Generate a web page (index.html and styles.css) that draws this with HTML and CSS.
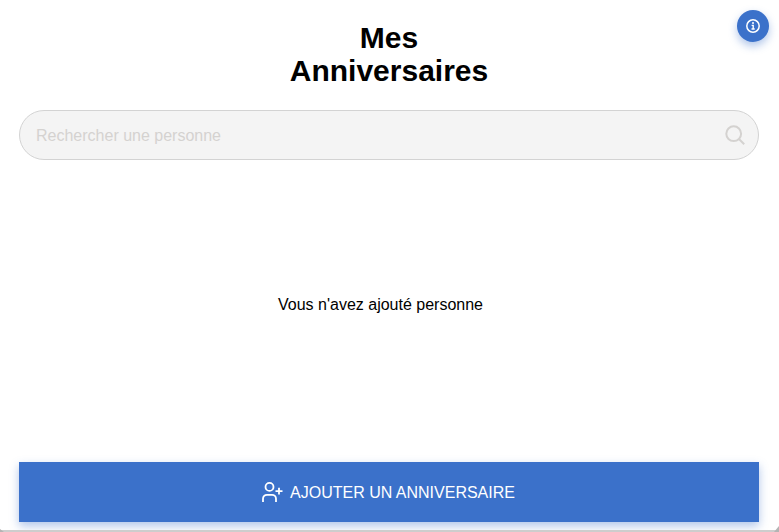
FILE: index.html
```html
<!DOCTYPE html>
<html lang="fr">
<head>
<meta charset="utf-8">
<title>Mes Anniversaires</title>
<link rel="stylesheet" href="styles.css">
</head>
<body>
<main class="app">
  <h1 class="title">Mes<br>Anniversaires</h1>
  <button class="info" aria-label="Informations">
    <svg width="14" height="14" viewBox="0 0 14 14" fill="none" stroke="currentColor"><circle cx="7" cy="7" r="6.2" stroke-width="1.5"/><path d="M5.6 6.4h1.6V10M5.5 10h3.2" stroke-width="1.4"/><circle cx="7" cy="3.9" r="1" fill="currentColor" stroke="none"/></svg>
  </button>
  <label class="search">
    <input class="search-input" type="text" placeholder="Rechercher une personne">
    <svg width="20" height="20" viewBox="0 0 20 20" fill="none" stroke="currentColor" stroke-width="2"><circle cx="8.7" cy="8.7" r="7.4"/><path d="M14 14l5.2 5.2"/></svg>
  </label>
  <section class="empty"><p class="message">Vous n'avez ajouté personne</p></section>
  <button class="add">
    <svg width="21" height="20" viewBox="0 0 21 20" fill="none" stroke="currentColor" stroke-width="1.8"><circle cx="7.5" cy="4.9" r="4"/><path d="M1 20v-3.2a4 4 0 0 1 4-4h5a4 4 0 0 1 4 4V20M17 5.8v6.6M13.5 9.1h7"/></svg>
    <span class="add-label">AJOUTER UN ANNIVERSAIRE</span>
  </button>
  <div class="edge"></div>
</main>
</body>
</html>
```
FILE: styles.css
```css
* { box-sizing: border-box; }
body {
  margin: 0;
  background: #fff;
  color: #000;
  font: 16px/24px "Liberation Sans", Arial, sans-serif;
}
.app {
  position: relative;
  display: flex;
  flex-direction: column;
  height: 532px;
  padding: 21px 20px 10px 19px;
  overflow: hidden;
}
.title {
  margin: 0 0 23px;
  font-size: 30px;
  line-height: 33px;
  font-weight: 700;
  text-align: center;
}
button {
  padding: 0;
  border: 0;
  background: #3b71ca;
  color: #fff;
  font: inherit;
  display: flex;
  align-items: center;
  justify-content: center;
}
.info {
  position: absolute;
  top: 10px;
  right: 10px;
  width: 32px;
  height: 32px;
  border-radius: 50%;
  box-shadow: 0 4px 9px rgba(59, 113, 202, .4);
}
.search {
  display: flex;
  align-items: center;
  height: 50px;
  padding: 0 13px 0 16px;
  border: 1px solid #d3d3d3;
  border-radius: 25px;
  background: #f4f4f4;
  color: #d4d2d0;
}
.search-input {
  flex: 1;
  min-width: 0;
  padding: 2px 0 0;
  border: 0;
  outline: 0;
  background: transparent;
  font: inherit;
}
.search-input::placeholder { color: #d4d2d0; opacity: 1; }
.empty {
  flex: 1;
  display: flex;
  justify-content: center;
  padding: 133px 17px 0 0;
}
.message { margin: 0; }
.add {
  height: 60px;
  gap: 7px;
  padding-right: 1px;
  box-shadow: 0 4px 9px rgba(59, 113, 202, .4);
}
.add-label { padding-top: 2px; }
.edge {
  position: absolute;
  inset: auto 0 0;
  height: 2px;
  background: #cdcdcd;
}
.edge::before,
.edge::after {
  content: "";
  position: absolute;
  bottom: 0;
  border-bottom: 3px solid #b4b4b4;
}
.edge::before { left: 0; border-right: 4px solid transparent; }
.edge::after { right: 0; border-bottom-width: 6px; border-left: 5px solid transparent; }
```
